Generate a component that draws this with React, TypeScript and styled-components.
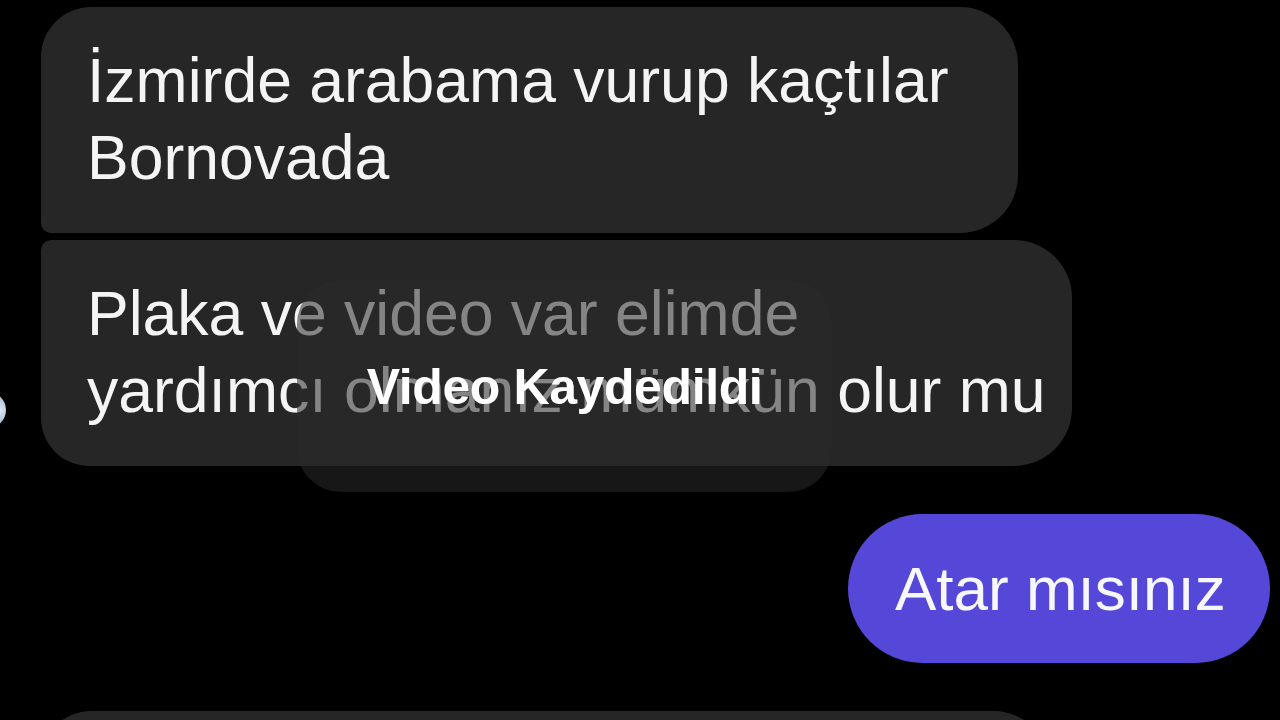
import React from "react";
import styled, { createGlobalStyle } from "styled-components";

const Global = createGlobalStyle`
  html, body {
    margin: 0;
    padding: 0;
    background: #000;
    overflow: hidden;
  }
  #root {
    width: 1280px;
    height: 720px;
  }
`;

const Screen = styled.div`
  position: relative;
  width: 1280px;
  height: 720px;
  background: #000;
  overflow: hidden;
  font-family: "Liberation Sans", Arial, sans-serif;
`;

const Thread = styled.div`
  display: flex;
  flex-direction: column;
  padding: 7px 10px 0 41px;
`;

const Group = styled.div`
  display: flex;
  flex-direction: column;
  gap: 7px;
`;

const Spacer = styled.div<{ $h: number }>`
  height: ${(p) => p.$h}px;
  flex: none;
`;

type Corner = "first" | "last" | "single";

const radii: Record<Corner, string> = {
  first: "50px 58px 58px 10px",
  last: "10px 58px 58px 48px",
  single: "50px 58px 58px 50px",
};

const Bubble = styled.div<{ $width: number; $pos: Corner }>`
  box-sizing: border-box;
  width: ${(p) => p.$width}px;
  flex: none;
  background: #262626;
  color: #f4f4f4;
  font-size: 62.5px;
  line-height: 77px;
  padding: 35px 40px 37px 46px;
  border-radius: ${(p) => radii[p.$pos]};
  white-space: nowrap;
`;

const OutBubble = styled.div<{ $width: number }>`
  box-sizing: border-box;
  align-self: flex-end;
  width: ${(p) => p.$width}px;
  background: #5547d7;
  color: #f7f7ff;
  font-size: 62px;
  line-height: 77px;
  padding: 36px 44px 36px 47px;
  border-radius: 75px;
  white-space: nowrap;
`;

const Avatar = styled.div`
  position: absolute;
  left: -30px;
  top: 392px;
  width: 36px;
  height: 36px;
  border-radius: 50%;
  background: radial-gradient(circle at 80% 50%, #dfe9f5 0%, #8fa7c2 60%, #2b3646 100%);
`;

const Toast = styled.div`
  position: absolute;
  left: 297px;
  top: 280px;
  width: 535px;
  height: 212px;
  border-radius: 44px;
  background: rgba(42, 42, 42, 0.55);
  display: flex;
  align-items: center;
  justify-content: center;
  color: #ffffff;
  font-family: "Liberation Sans", Arial, sans-serif;
  font-weight: 700;
  font-size: 50px;
  letter-spacing: -0.4px;
  padding-top: 2px;
  box-sizing: border-box;
`;

export default function App() {
  return (
    <Screen>
      <Global />
      <Thread>
        <Group>
          <Bubble $width={977} $pos="first">
            İzmirde arabama vurup kaçtılar
            <br />
            Bornovada
          </Bubble>
          <Bubble $width={1031} $pos="last">
            Plaka ve video var elimde
            <br />
            yardımcı olmanız mümkün olur mu
          </Bubble>
        </Group>
        <Spacer $h={48} />
        <OutBubble $width={422}>Atar mısınız</OutBubble>
        <Spacer $h={48} />
        <Bubble $width={1010} $pos="single">
          &nbsp;
        </Bubble>
      </Thread>
      <Avatar />
      <Toast>Video Kaydedildi</Toast>
    </Screen>
  );
}
